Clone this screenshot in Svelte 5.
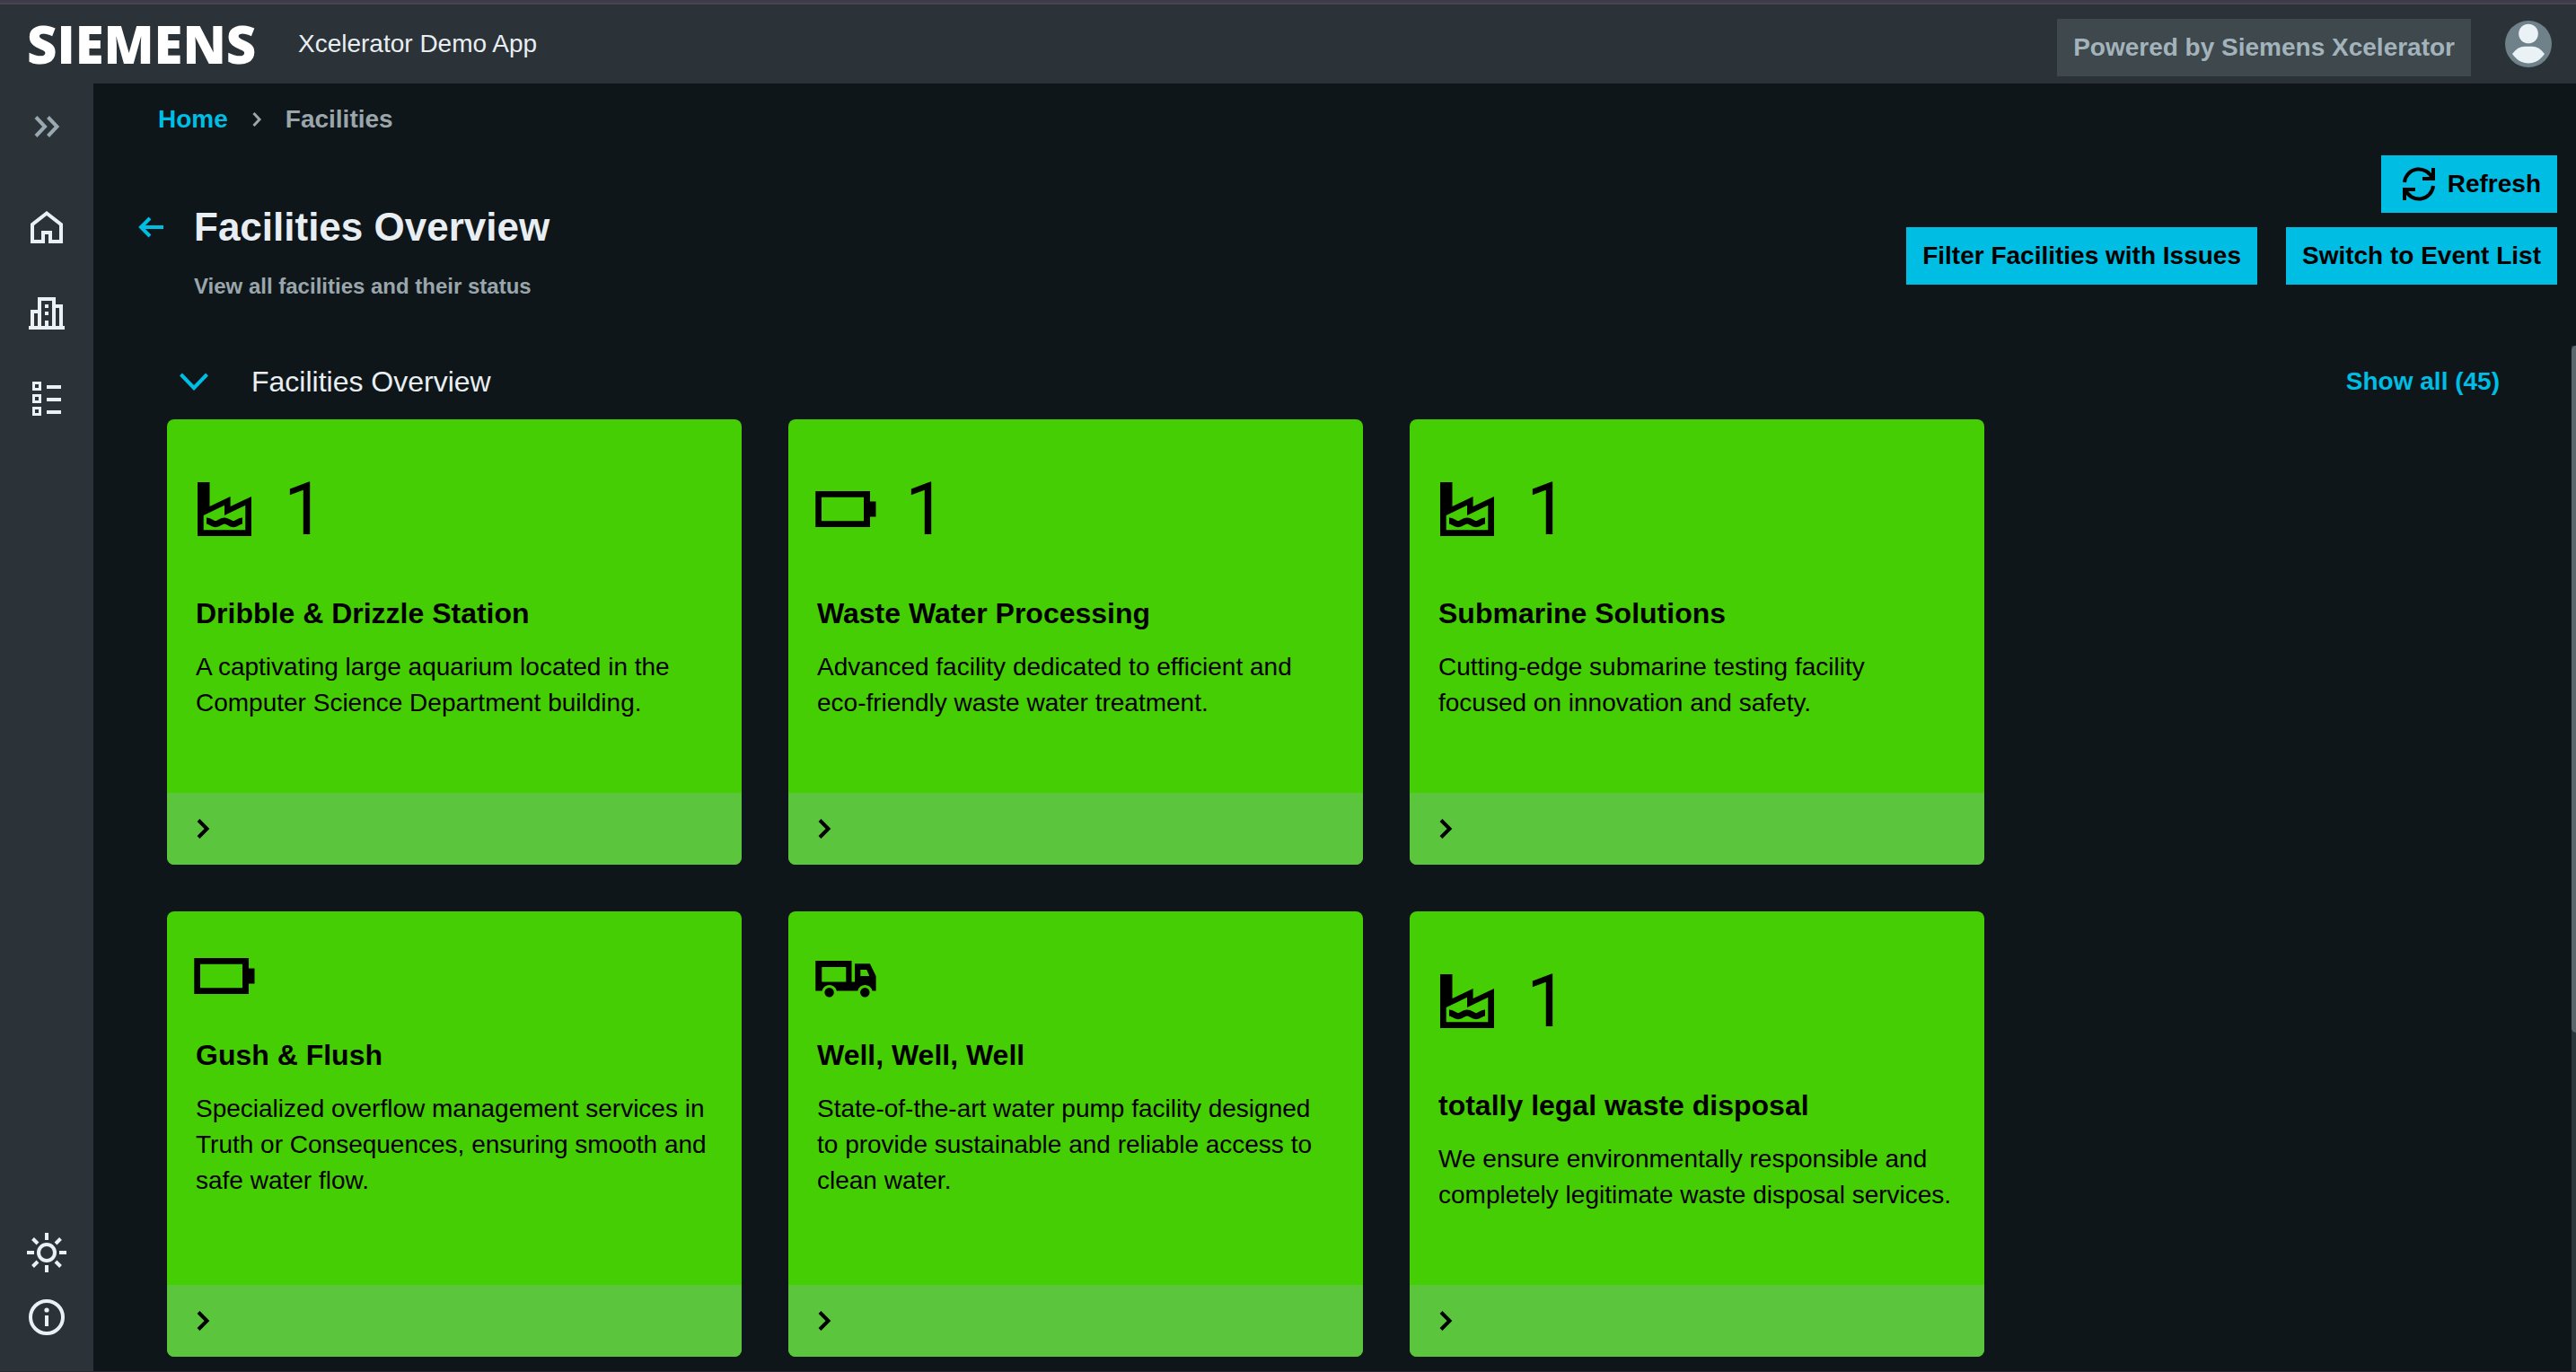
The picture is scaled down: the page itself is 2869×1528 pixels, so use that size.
<script>
  const facilities = [
    { name: 'Dribble & Drizzle Station', icon: 'factory', count: 1, text: 'A captivating large aquarium located in the Computer Science Department building.' },
    { name: 'Waste Water Processing', icon: 'battery', count: 1, text: 'Advanced facility dedicated to efficient and eco-friendly waste water treatment.' },
    { name: 'Submarine Solutions', icon: 'factory', count: 1, text: 'Cutting-edge submarine testing facility focused on innovation and safety.' },
    { name: 'Gush & Flush', icon: 'battery', text: 'Specialized overflow management services in Truth or Consequences, ensuring smooth and safe water flow.' },
    { name: 'Well, Well, Well', icon: 'truck', text: 'State-of-the-art water pump facility designed to provide sustainable and reliable access to clean water.' },
    { name: 'totally legal waste disposal', icon: 'factory', count: 1, text: 'We ensure environmentally responsible and completely legitimate waste disposal services.' }
  ];
</script>

{#snippet facilityIcon(kind)}
  <svg class="facility-icon" viewBox="0 0 64 64" aria-hidden="true">
    {#if kind === 'factory'}
      <g transform="translate(2 2)">
        <path fill-rule="evenodd" d="M0 0H13.5V27L36.6 16V27L60 16V60H0ZM6.7 37V53.3H53.3V25.7L30 37V25.7Z" />
        <path class="wave" d="M10 43C14 43 16 46.7 20 46.7S26 43 30 43S36 46.7 40 46.7S46 43 50 43" />
      </g>
    {:else if kind === 'battery'}
      <path fill-rule="evenodd" d="M-1.7 12H59V23.5H65.5V40.5H59V52H-1.7ZM5 18.7V45.3H52V18.7Z" />
    {:else}
      <g transform="translate(-1.7 15)">
        <path fill-rule="evenodd" d="M0 0H40.2V23.5H43.8V3.3H60.6L67.3 17V33.5H63.2A8.3 8.3 0 0 0 47 33.5H23.5A8.3 8.3 0 0 0 7.3 33.5H0ZM7 7V23.5H34V7ZM50 10V17H60L57 10Z" />
        <circle cx="15.3" cy="35.3" r="5.2" />
        <circle cx="55" cy="35.3" r="5.2" />
      </g>
    {/if}
  </svg>
{/snippet}

<div class="app">
  <header class="topbar">
    <span class="logo">SIEMENS</span>
    <span class="app-name">Xcelerator Demo App</span>
    <button class="powered" type="button">Powered by Siemens Xcelerator</button>
    <button class="avatar" type="button" aria-label="User profile">
      <svg viewBox="0 0 52 52" width="52" height="52">
        <circle cx="26" cy="26" r="26" fill="#6f828a" />
        <circle cx="26" cy="14.5" r="10.8" fill="#ebf2f6" />
        <path d="M8 37Q14 28.7 22 28.7H30Q38 28.7 44 37C39 44 33 47.5 26 47.5S13 44 8 37Z" fill="#ebf2f6" />
      </svg>
    </button>
  </header>

  <div class="body">
    <nav class="sidebar" aria-label="Main">
      <button class="nav-item expand" type="button" aria-label="Expand menu">
        <svg viewBox="0 0 28 24" width="28" height="24" class="line"><path d="M2 1.5L12 12L2 22.5M15.5 1.5L25.500 12L15.5 22.5" /></svg>
      </button>
      <a class="nav-item" href="#home" aria-label="Home">
        <svg viewBox="0 0 36 36" width="36" height="36"><path fill-rule="evenodd" d="M18 0L36 14V36H20V26H16V36H0V14ZM18 5L4 16V32H12V22H24V32H32V16Z" /></svg>
      </a>
      <a class="nav-item" href="#facilities" aria-label="Facilities">
        <svg viewBox="0 0 40 36" width="40" height="36"><path fill-rule="evenodd" d="M0 32H2V14H10V0H30V8H38V32H40V36H0ZM6 18V32H10V18ZM14 4V32H18V26H22V32H26V4ZM30 12V32H34V12ZM18 8H22V12H18ZM18 16H22V20H18Z" /></svg>
      </a>
      <a class="nav-item" href="#events" aria-label="Events">
        <svg viewBox="0 0 32 40" width="32" height="40"><path fill-rule="evenodd" d="M0 0H10V10H0ZM3 3V7H7V3ZM0 14H10V24H0ZM3 17V21H7V17ZM0 28H10V38H0ZM3 31V35H7V31ZM16 4H32V8H16ZM16 18H32V22H16ZM16 32H32V36H16Z" /></svg>
      </a>
      <div class="nav-bottom">
        <button class="nav-item small" type="button" aria-label="Toggle theme">
          <svg viewBox="0 0 44 44" width="44" height="44" class="line"><circle cx="22" cy="22" r="9" /><path d="M22 0V8M22 36V44M0 22H8M36 22H44M6.5 6.5L12 12M32 32L37.5 37.5M6.5 37.5L12 32M32 12L37.5 6.5" /></svg>
        </button>
        <button class="nav-item small" type="button" aria-label="About">
          <svg viewBox="0 0 40 40" width="40" height="40"><circle cx="20" cy="20" r="18" fill="none" stroke="currentColor" stroke-width="4" /><circle cx="20" cy="12" r="2.6" /><path d="M18 18H22V30H18Z" /></svg>
        </button>
      </div>
    </nav>

    <main>
      <nav class="breadcrumb" aria-label="Breadcrumb">
        <a href="#home">Home</a>
        <svg viewBox="0 0 10 16" width="10" height="16" class="line"><path d="M1.5 1L8 8L1.5 15" /></svg>
        <span>Facilities</span>
      </nav>

      <div class="page-head">
        <button class="back" type="button" aria-label="Back">
          <svg viewBox="0 0 28 24" width="28" height="24" class="line"><path d="M28 12H3M13 2L3 12L13 22" /></svg>
        </button>
        <div class="titles">
          <h1>Facilities Overview</h1>
          <p>View all facilities and their status</p>
        </div>
        <div class="actions">
          <button class="primary" type="button">
            <svg viewBox="0 0 48 48" width="48" height="48" class="line"><path d="M8 22A16 16 0 0 1 39 18M40 6V18H28M40 26A16 16 0 0 1 9 30M8 42V30H20" /></svg>
            Refresh
          </button>
          <div class="action-row">
            <button class="primary" type="button">Filter Facilities with Issues</button>
            <button class="primary" type="button">Switch to Event List</button>
          </div>
        </div>
      </div>

      <section>
        <div class="section-head">
          <button class="toggle" type="button" aria-label="Collapse section">
            <svg viewBox="0 0 32 20" width="32" height="20" class="line"><path d="M1.5 2L16 17L30.5 2" /></svg>
          </button>
          <h2>Facilities Overview</h2>
          <a href="#all">Show all (45)</a>
        </div>
        <div class="cards">
          {#each facilities as f}
            <article class="card">
              <div class="card-body">
                <div class="stat">
                  {@render facilityIcon(f.icon)}
                  {#if f.count}<span>{f.count}</span>{/if}
                </div>
                <h3>{f.name}</h3>
                <p>{f.text}</p>
              </div>
              <button class="card-foot" type="button" aria-label="Open {f.name}">
                <svg viewBox="0 0 14 22" width="14" height="22"><path d="M2 1.5L11.5 11L2 20.5" /></svg>
              </button>
            </article>
          {/each}
        </div>
      </section>
      <div class="scroll-track"><div class="scroll-thumb"></div></div>
    </main>
  </div>
</div>

<style>
  :global(body) {
    margin: 0;
    background: #0f1619;
  }
  .app {
    box-sizing: border-box;
    min-height: 100vh;
    display: flex;
    flex-direction: column;
    border-bottom: 1px solid #2a2330;
    background: #0f1619;
    color: #e8eef2;
    font-family: 'Liberation Sans', Arial, sans-serif;
    font-size: 28px;
    line-height: 40px;
  }
  h1, h2, h3, p {
    margin: 0;
  }
  button {
    margin: 0;
    padding: 0;
    border: 0;
    background: none;
    color: inherit;
    font: inherit;
    cursor: pointer;
  }
  a {
    color: #00bde3;
    font-weight: 700;
    text-decoration: none;
  }
  svg {
    display: block;
    flex: none;
    fill: currentColor;
    overflow: visible;
  }
  .line {
    fill: none;
    stroke: currentColor;
    stroke-width: 4px;
  }

  .topbar {
    display: flex;
    align-items: center;
    height: 88px;
    padding: 2px 27px 0 30px;
    border-top: 3px solid #3f3b4e;
    background: #2b3238;
    box-shadow: inset 0 2px #47464c;
  }
  .logo {
    width: 302px;
    color: #fff;
    font: 800 58px/56px 'Open Sans', 'Noto Sans', sans-serif;
  }
  .app-name {
    flex: 1;
  }
  .powered {
    align-self: flex-end;
    height: 64px;
    margin-bottom: 8px;
    padding: 0 18px;
    background: #3e484d;
    color: #a3b3bb;
    font-weight: 700;
  }
  .avatar {
    margin-left: 38px;
  }

  .body {
    flex: 1;
    display: flex;
  }
  .sidebar {
    flex: none;
    display: flex;
    flex-direction: column;
    width: 104px;
    background: #2b3238;
  }
  .nav-item {
    display: flex;
    align-items: center;
    justify-content: center;
    height: 96px;
    color: #ebf0f5;
  }
  .expand {
    margin-bottom: 16px;
    color: #9aa8b2;
  }
  .nav-bottom {
    display: flex;
    flex-direction: column;
    margin-top: auto;
    padding-bottom: 24px;
  }
  .small {
    height: 72px;
  }

  main {
    position: relative;
    flex: 1;
    min-width: 0;
    padding: 20px 21px 16px 50px;
  }
  .breadcrumb {
    display: flex;
    align-items: center;
    gap: 27px;
    padding-left: 22px;
    color: #9aa6ac;
    font-weight: 700;
  }
  .breadcrumb .line {
    stroke-width: 3px;
  }
  .page-head {
    display: flex;
    align-items: flex-start;
    min-height: 212px;
    margin-top: 20px;
  }
  .back {
    display: flex;
    align-items: center;
    height: 56px;
    margin-top: 52px;
    color: #00bde3;
  }
  .titles {
    flex: 1;
    margin: 52px 0 0 34px;
  }
  h1 {
    font-size: 44px;
    line-height: 56px;
  }
  .titles p {
    margin-top: 18px;
    color: #9aa6ac;
    font-size: 24px;
    font-weight: 700;
  }
  .actions {
    display: flex;
    flex-direction: column;
    align-items: flex-end;
    gap: 16px;
  }
  .action-row {
    display: flex;
    gap: 32px;
  }
  .primary {
    display: flex;
    align-items: center;
    gap: 8px;
    height: 64px;
    padding: 0 18px;
    background: #00bde3;
    color: #000;
    font-weight: 700;
  }

  section {
    padding: 16px 64px 0 32px;
  }
  .section-head {
    display: flex;
    align-items: center;
    margin-bottom: 18px;
    padding-left: 14px;
  }
  .toggle {
    color: #00bde3;
  }
  h2 {
    flex: 1;
    margin-left: 48px;
    font-size: 32px;
    font-weight: 400;
    line-height: 48px;
  }
  .cards {
    display: grid;
    grid-template-columns: repeat(auto-fill, 640px);
    gap: 52px;
    max-width: 2100px;
  }
  .card {
    display: flex;
    flex-direction: column;
    min-height: 496px;
    border-radius: 8px;
    overflow: hidden;
    background: #46ce04;
    color: #000;
  }
  .card-body {
    flex: 1;
    padding: 40px 32px 16px;
  }
  .stat {
    display: flex;
    align-items: center;
    gap: 34px;
    margin-bottom: 32px;
    font-family: Roboto, 'Liberation Sans', sans-serif;
    font-size: 82px;
    line-height: 120px;
  }
  .facility-icon {
    width: 64px;
    height: 64px;
  }
  .wave {
    fill: none;
    stroke: currentColor;
    stroke-width: 7px;
  }
  h3 {
    margin-bottom: 16px;
    font-size: 32px;
    line-height: 48px;
  }
  .card-foot {
    display: flex;
    align-items: center;
    height: 80px;
    padding: 0 33px;
    background: #5ac53d;
  }
  .card-foot svg {
    fill: none;
    stroke: currentColor;
    stroke-width: 4px;
  }
  .scroll-track {
    position: absolute;
    top: 292px;
    right: 0;
    bottom: 0;
    width: 5px;
    background: #2b363c;
  }
  .scroll-thumb {
    height: 67%;
    border-radius: 5px 0 0 5px;
    background: #5a666c;
  }
</style>
